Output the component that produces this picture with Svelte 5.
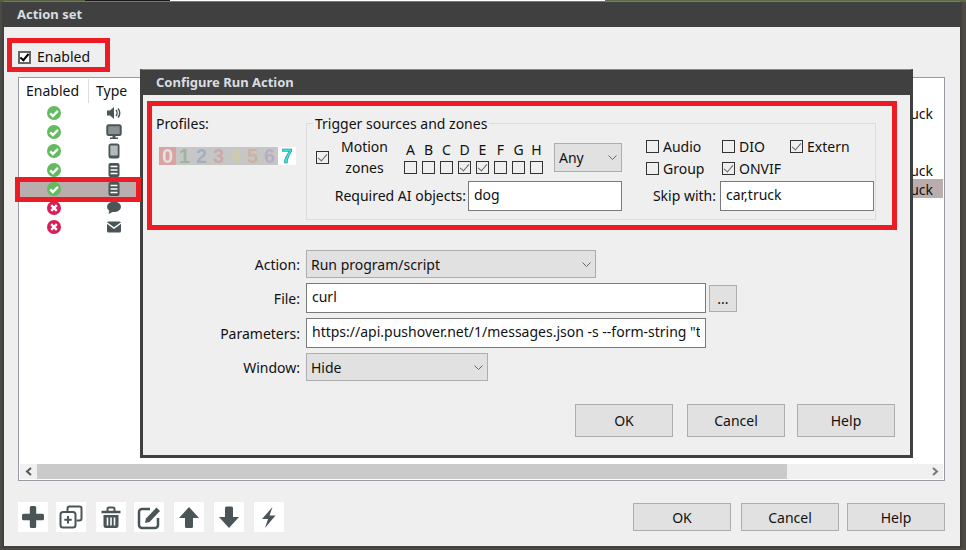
<script>
  const rows = [
    { ok: true, type: 'speaker', note: 'car,truck' },
    { ok: true, type: 'monitor', note: '' },
    { ok: true, type: 'phone', note: '' },
    { ok: true, type: 'doc', note: 'car,truck' },
    { ok: true, type: 'doc', note: 'car,truck', selected: true },
    { ok: false, type: 'bubble', note: '' },
    { ok: false, type: 'mail', note: '' }
  ];
  const zones = [
    ['A', false], ['B', false], ['C', false], ['D', true],
    ['E', true], ['F', false], ['G', false], ['H', false]
  ];
  const sources = [
    ['Audio', false], ['DIO', false], ['Extern', true],
    ['Group', false], ['ONVIF', true]
  ];
  const digits = ['0', '1', '2', '3', '4', '5', '6'];
  const tools = ['plus', 'copy', 'trash', 'edit', 'up', 'down', 'bolt'];
</script>

{#snippet typeIcon(name)}
  <svg width="16" height="16" viewBox="0 0 16 16" fill="#4a5557">
    {#if name === 'speaker'}
      <path d="M1 5.500h3L8 2v12L4 10.500H1z" />
      <path d="M10 5c1.400 1.600 1.400 4.400 0 6M12 3.500c2.300 2.500 2.300 6.500 0 9" fill="none" stroke="#4a5557" stroke-width="1.500" />
    {:else if name === 'monitor'}
      <rect x="1.300" y="1.300" width="13.400" height="9.700" rx="1.500" fill="#8a9192" stroke="#4a5557" stroke-width="2" />
      <path d="M6.500 12h3v1.500H12V15H4v-1.500h2.500z" />
    {:else if name === 'phone'}
      <rect x="2.500" y="0.500" width="11" height="15" rx="2.500" />
      <rect x="4.300" y="2.500" width="7.400" height="10" fill="#b5bbbc" />
    {:else if name === 'doc'}
      <rect x="2.500" y="1" width="11" height="14" rx="2" />
      <path d="M4.500 4.500h7M4.500 8h7M4.500 11.500h7" stroke="#fff" stroke-width="1.500" />
    {:else if name === 'bubble'}
      <ellipse cx="8" cy="6.800" rx="7" ry="5.300" />
      <path d="M3.500 10l-1 4 5-2.500z" />
    {:else}
      <rect x="1" y="2.500" width="14" height="11" rx="1.500" />
      <path d="M1 4l7 5 7-5" fill="none" stroke="#fff" stroke-width="1.500" />
    {/if}
  </svg>
{/snippet}

{#snippet toolIcon(name)}
  <svg width="26" height="26" viewBox="0 0 26 26" fill="#4a5557">
    {#if name === 'plus'}
      <rect x="9.800" y="2" width="6.400" height="22" rx="1.500" />
      <rect x="2" y="9.800" width="22" height="6.400" rx="1.500" />
    {:else if name === 'copy'}
      <path d="M9.500 7V4.500a2 2 0 0 1 2-2h10a2 2 0 0 1 2 2v10a2 2 0 0 1-2 2h-3" fill="none" stroke="#4a5557" stroke-width="2" />
      <rect x="2.500" y="8" width="15" height="15.500" rx="2.500" fill="none" stroke="#4a5557" stroke-width="2" />
      <path d="M10 12v7.500M6.300 15.700h7.400" stroke="#4a5557" stroke-width="2" />
    {:else if name === 'trash'}
      <path d="M3.500 8h19" stroke="#4a5557" stroke-width="2.500" />
      <path d="M9.500 7V5a1.500 1.500 0 0 1 1.500-1.500h4A1.500 1.500 0 0 1 16.500 5v2" fill="none" stroke="#4a5557" stroke-width="2" />
      <path d="M5.500 11h15v10.500a2.500 2.500 0 0 1-2.500 2.500H8a2.500 2.500 0 0 1-2.500-2.500z" />
      <path d="M9.500 13.500v8M13 13.500v8M16.500 13.500v8" stroke="#fff" stroke-width="1.600" />
    {:else if name === 'edit'}
      <path d="M14 5H6a3 3 0 0 0-3 3v13a3 3 0 0 0 3 3h13a3 3 0 0 0 3-3v-7" fill="none" stroke="#4a5557" stroke-width="2.500" />
      <path d="M10 14.500L20.500 3.500l3.500 3.500L13.500 18l-4.500 1z" />
    {:else if name === 'up'}
      <path d="M13 3L23 14h-6v8.500a1.500 1.500 0 0 1-1.500 1.500h-5A1.500 1.500 0 0 1 9 22.500V14H3z" />
    {:else if name === 'down'}
      <path d="M13 24L23 13h-6V4a1.500 1.500 0 0 0-1.500-1.500h-5A1.500 1.500 0 0 0 9 4v9H3z" />
    {:else}
      <path d="M16.500 3L6 15h6l-3 9 10.500-12.500h-6z" />
    {/if}
  </svg>
{/snippet}

{#snippet dropdown(value, cls)}
  <div class="select {cls}">
    <span>{value}</span>
    <svg width="9" height="5" viewBox="0 0 9 5"><path d="M0.500 0.500l4 4 4-4" fill="none" stroke="#666" /></svg>
  </div>
{/snippet}

<div class="desktop">
  <div class="strip"></div>
  <section class="window">
    <header class="titlebar">Action set</header>
    <div class="window-body">
      <label class="enabled"><input type="checkbox" class="strong" checked /> <span class="lift">Enabled</span></label>

      <div class="list">
        <div class="list-head">
          <span class="head-enabled"><span class="lift">Enabled</span></span>
          <span class="head-type"><span class="lift">Type</span></span>
        </div>
        <div class="list-rows">
          {#each rows as row}
            <div class="list-row" class:selected={row.selected}>
              <span class="col-enabled">
                {#if row.ok}
                  <svg width="16" height="16" viewBox="0 0 16 16">
                    <circle cx="8" cy="8" r="7" fill="#62bb5e" />
                    <path d="M4.200 8.300l2.700 2.700 5-5.200" fill="none" stroke="#fff" stroke-width="2.400" />
                  </svg>
                {:else}
                  <svg width="16" height="16" viewBox="0 0 16 16">
                    <circle cx="8" cy="8" r="7" fill="#dc1c55" />
                    <path d="M5.200 5.200l5.600 5.600M10.800 5.200l-5.600 5.600" stroke="#fff" stroke-width="2.400" />
                  </svg>
                {/if}
              </span>
              <span class="col-type">{@render typeIcon(row.type)}</span>
              <span class="col-note">{row.note}</span>
            </div>
          {/each}
        </div>
        <div class="scrollbar">
          <span class="arrow">
            <svg width="8" height="9" viewBox="0 0 8 9"><path d="M6 1L2 4.500 6 8" fill="none" stroke="#555" stroke-width="2" /></svg>
          </span>
          <span class="thumb"></span>
          <span class="arrow right">
            <svg width="8" height="9" viewBox="0 0 8 9"><path d="M2 1l4 3.500L2 8" fill="none" stroke="#777" stroke-width="2" /></svg>
          </span>
        </div>
      </div>

      <div class="footer">
        <div class="tools">
          {#each tools as tool}
            <button class="tool" type="button" aria-label={tool}>{@render toolIcon(tool)}</button>
          {/each}
        </div>
        <div class="actions">
          <button class="btn" type="button">OK</button>
          <button class="btn" type="button">Cancel</button>
          <button class="btn narrow" type="button">Help</button>
        </div>
      </div>
    </div>
  </section>

  <section class="dialog">
    <header class="titlebar small">Configure Run Action</header>
    <div class="dialog-body">
      <div class="top">
        <div class="profiles">
          <span class="lift">Profiles:</span>
          <div class="tiles">
            {#each digits as d, i}
              <span class="tile d{i}">{d}</span>
            {/each}
            <span class="tile on">7</span>
          </div>
        </div>

        <div class="group">
          <span class="legend">Trigger sources and zones</span>
          <div class="group-top">
            <input type="checkbox" checked />
            <span class="motion">Motion<br />zones</span>
            <div class="zones">
              {#each zones as [letter, on]}
                <div class="zone">
                  <span>{letter}</span>
                  <input type="checkbox" checked={on} />
                </div>
              {/each}
            </div>
            {@render dropdown('Any', 'any')}
            <div class="sources">
              {#each sources as [name, on]}
                <label><input type="checkbox" checked={on} /> {name}</label>
              {/each}
            </div>
          </div>
          <div class="group-bottom">
            <span class="req lift">Required AI objects:</span>
            <input class="text short" type="text" value="dog" />
            <span class="skip lift">Skip with:</span>
            <input class="text short" type="text" value="car,truck" />
          </div>
        </div>
      </div>

      <div class="form">
        <span class="lbl">Action:</span>
        {@render dropdown('Run program/script', 'action')}
        <span class="lbl">File:</span>
        <div class="file">
          <input class="text wide" type="text" value="curl" />
          <button class="dots" type="button">...</button>
        </div>
        <span class="lbl">Parameters:</span>
        <input class="text wide" type="text" value={'https://api.pushover.net/1/messages.json -s --form-string "token=abc"'} />
        <span class="lbl">Window:</span>
        {@render dropdown('Hide', 'win')}
      </div>

      <div class="dialog-actions">
        <button class="btn tall" type="button">OK</button>
        <button class="btn tall" type="button">Cancel</button>
        <button class="btn tall" type="button">Help</button>
      </div>
    </div>

    <div class="mark mark-group"></div>
  </section>

  <div class="mark mark-enabled"></div>
  <div class="mark mark-row"></div>
</div>

<style>
  :global(body) {
    margin: 0;
    background: #3a3630;
    font-family: "Noto Sans", "Open Sans", sans-serif;
    font-size: 14px;
    color: #111;
  }

  .desktop {
    position: relative;
    width: 966px;
    height: 550px;
    overflow: hidden;
    background: #4c4a42;
  }

  .strip {
    height: 2px;
    background: linear-gradient(90deg, #55603f 0 85px, #1c1a18 85px 170px, #fff 170px 605px, #5d6b45 605px);
  }

  .window {
    position: absolute;
    left: 2px;
    top: 1px;
    width: 960px;
    height: 547px;
    box-sizing: border-box;
    display: flex;
    flex-direction: column;
    background: #efefef;
    border: 2px solid #404040;
    border-top: 1px solid #777;
  }

  .titlebar {
    height: 25px;
    box-sizing: border-box;
    flex: none;
    display: flex;
    align-items: center;
    padding: 0 0 2px 13px;
    background: #404040;
    color: #d8dde0;
    font-size: 13px;
    font-weight: 700;
  }

  .lift {
    position: relative;
    top: -1px;
  }

  .window-body {
    flex: 1;
    min-height: 0;
    display: flex;
    flex-direction: column;
    padding: 0 15px 0 14px;
  }

  .enabled {
    margin-top: 20px;
    height: 20px;
    display: flex;
    align-items: center;
    gap: 6px;
  }

  .list {
    margin-top: 10px;
    height: 404px;
    box-sizing: border-box;
    display: flex;
    flex-direction: column;
    padding: 1px;
    background: #fff;
    border: 1px solid #9a9aa2;
    flex: none;
  }

  .list-head {
    height: 24px;
    display: flex;
    align-items: stretch;
    flex: none;
  }

  .head-enabled {
    width: 69px;
    padding-right: 3px;
    box-sizing: border-box;
    display: flex;
    align-items: center;
    justify-content: center;
    border-right: 1px solid #ddd;
    flex: none;
  }

  .head-type {
    padding-left: 7px;
    display: flex;
    align-items: center;
  }

  .list-rows {
    flex: 1;
  }

  .list-row {
    height: 19px;
    display: flex;
    align-items: center;
  }

  .list-row.selected {
    background: #b9adad;
  }

  .col-enabled {
    width: 68px;
    padding-right: 2px;
    display: flex;
    justify-content: center;
    flex: none;
  }

  .col-type {
    width: 48px;
    padding-right: 2px;
    display: flex;
    justify-content: center;
    flex: none;
  }

  .col-note {
    margin-left: auto;
    padding: 2px 10px 0 0;
  }

  .scrollbar {
    height: 15px;
    flex: none;
    display: flex;
    background: #f0f0f0;
  }

  .arrow {
    width: 17px;
    display: flex;
    align-items: center;
    justify-content: center;
  }

  .arrow.right {
    margin-left: auto;
  }

  .thumb {
    width: 750px;
    background: #cacaca;
  }

  .footer {
    margin-top: 21px;
    display: flex;
    align-items: center;
  }

  .tools {
    display: flex;
    gap: 8px;
  }

  .tool {
    width: 30px;
    height: 30px;
    padding: 0;
    display: flex;
    align-items: center;
    justify-content: center;
    background: #fff;
    border: 0;
  }

  .tool:nth-child(2),
  .tool:nth-child(4),
  .tool:nth-child(5),
  .tool:nth-child(6) {
    margin-right: 2px;
  }

  .actions {
    margin-left: auto;
    display: flex;
    gap: 10px;
  }

  .btn {
    width: 98px;
    height: 28px;
    padding: 0;
    background: #e1e1e1;
    border: 1px solid #adadad;
    font: inherit;
    color: #111;
  }

  .btn.narrow {
    margin-left: -2px;
  }

  .btn.tall {
    height: 33px;
  }

  .dialog {
    position: absolute;
    left: 140px;
    top: 69px;
    width: 773px;
    height: 389px;
    box-sizing: border-box;
    display: flex;
    flex-direction: column;
    background: #efefef;
    border: 3px solid #404040;
    border-top: 1px solid #888;
  }

  .titlebar.small {
    height: 25px;
    padding-left: 13px;
  }

  .dialog-body {
    display: flex;
    flex-direction: column;
    padding-top: 28px;
  }

  .top {
    display: flex;
    align-items: flex-start;
  }

  .profiles {
    width: 150px;
    margin-left: 13px;
    margin-top: -8px;
    flex: none;
  }

  .tiles {
    display: flex;
    margin: 13px 0 0 3px;
    filter: blur(0.5px);
  }

  .tile {
    width: 17px;
    height: 18px;
    display: flex;
    align-items: center;
    justify-content: center;
    background: #c6c6c6;
    font-family: "Liberation Sans", sans-serif;
    font-size: 20px;
    font-weight: 700;
  }

  .tile.on {
    width: 18px;
    background: #fff;
    color: #33e4da;
    -webkit-text-stroke: 0.5px #247a78;
  }

  .d0 { background: #d9a3a3; color: #e6e0e0; }
  .d1 { color: #9fb49f; }
  .d2 { color: #a3b0c0; }
  .d3 { color: #cba9a9; }
  .d4 { color: #cfcba9; }
  .d5 { color: #cdb2a2; }
  .d6 { color: #b8adc2; }

  .group {
    position: relative;
    width: 570px;
    height: 97px;
    box-sizing: border-box;
    border: 1px solid #dcdcdc;
    padding-left: 9px;
  }

  .legend {
    position: absolute;
    left: 6px;
    top: -10px;
    padding: 0 2px;
    line-height: 19px;
    background: #efefef;
  }

  .group-top {
    height: 41px;
    margin-top: 13px;
    display: flex;
    align-items: center;
  }

  .motion {
    width: 71px;
    text-align: center;
    line-height: 21px;
    position: relative;
    top: -1px;
  }

  .zones {
    width: 144px;
    margin-left: 4px;
    display: flex;
    flex: none;
  }

  .zone {
    width: 18px;
    display: flex;
    flex-direction: column;
    gap: 2px;
    line-height: 19px;
    position: relative;
    top: -1px;
  }

  .zone span {
    width: 13px;
    text-align: center;
  }

  .select {
    position: relative;
    box-sizing: border-box;
    display: flex;
    align-items: center;
    justify-content: space-between;
    padding: 0 4px 0 4px;
    background: #e1e1e1;
    border: 1px solid #adadad;
  }

  .select.any {
    width: 68px;
    height: 29px;
    margin-left: 6px;
    flex: none;
  }

  .select.action {
    width: 290px;
    height: 28px;
  }

  .select.win {
    width: 182px;
    height: 28px;
  }

  .sources {
    margin-left: 24px;
    display: grid;
    grid-template-columns: 76px 68px auto;
    grid-auto-rows: 22px;
    height: 44px;
    margin-top: 8px;
  }

  .sources label {
    display: flex;
    align-items: center;
    gap: 4px;
    height: 14px;
  }

  .group-bottom {
    height: 30px;
    margin-top: 3px;
    display: flex;
    align-items: center;
  }

  .req {
    width: 150px;
    text-align: right;
    margin-right: 2px;
    flex: none;
  }

  .skip {
    width: 94px;
    text-align: right;
    margin-right: 4px;
    flex: none;
  }

  input[type="checkbox"] {
    appearance: none;
    position: relative;
    width: 13px;
    height: 13px;
    margin: 0;
    flex: none;
    box-sizing: border-box;
    background: #fff0;
    border: 1px solid #333;
  }

  input[type="checkbox"]:checked::before {
    content: "";
    position: absolute;
    left: 3px;
    top: 0;
    width: 4px;
    height: 8px;
    border: solid #666;
    border-width: 0 1px 1px 0;
    transform: rotate(40deg);
  }

  input.strong {
    background: #fff;
    outline: 2px solid #666;
    outline-offset: -2px;
  }

  input.strong:checked::before {
    border-color: #000;
    border-width: 0 2px 2px 0;
    left: 3px;
    top: 0;
    width: 3px;
    height: 7px;
  }

  .text {
    box-sizing: border-box;
    height: 30px;
    padding: 0 5px 3px;
    background: #fff;
    border: 1px solid #7a7a7a;
    border-radius: 0;
    font: inherit;
    color: #111;
    outline: none;
  }

  .text.short {
    width: 154px;
  }

  .text.wide {
    width: 400px;
  }

  .form {
    margin-top: 30px;
    display: grid;
    grid-template-columns: 157px 1fr;
    grid-template-rows: 28px 30px 30px 28px;
    column-gap: 6px;
    row-gap: 5px;
    align-items: center;
  }

  .lbl {
    text-align: right;
  }

  .file {
    display: flex;
    align-items: center;
    gap: 3px;
  }

  .dots {
    width: 28px;
    height: 27px;
    padding: 0;
    background: #e1e1e1;
    border: 1px solid #adadad;
    font: inherit;
    color: #111;
  }

  .dialog-actions {
    margin-top: 23px;
    padding-right: 15px;
    display: flex;
    justify-content: flex-end;
    gap: 12px;
  }

  .dialog-actions .btn:first-child {
    margin-right: 2px;
  }

  .mark {
    position: absolute;
    box-sizing: border-box;
    border: 4px solid #ed1c24;
    pointer-events: none;
  }

  .mark-group {
    left: 4px;
    top: 31px;
    width: 750px;
    height: 129px;
    border-width: 5px;
  }

  .mark-enabled {
    left: 7px;
    top: 38px;
    width: 103px;
    height: 34px;
    border-width: 5px;
  }

  .mark-row {
    left: 15px;
    top: 177px;
    width: 126px;
    height: 25px;
    border-width: 5px;
  }
</style>
